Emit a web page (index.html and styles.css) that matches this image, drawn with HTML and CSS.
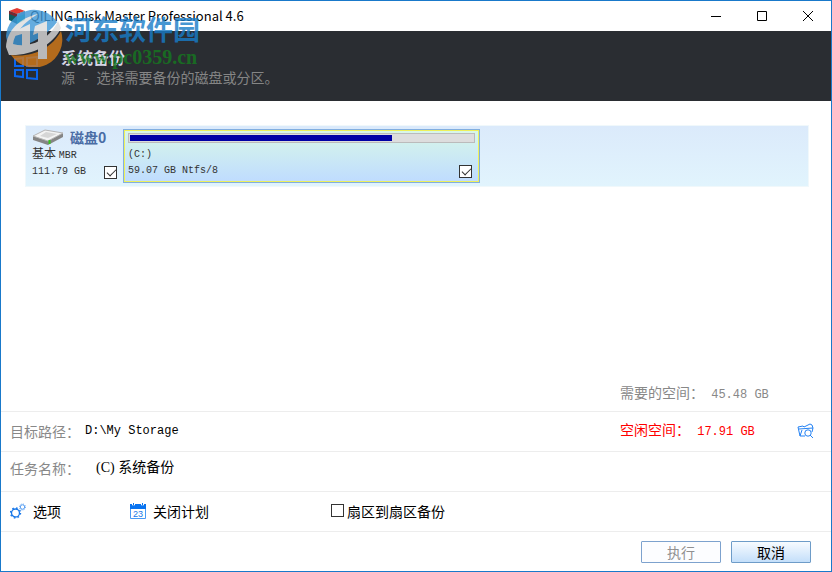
FILE: index.html
```html
<!DOCTYPE html>
<html lang="zh-CN">
<head>
  <meta charset="UTF-8">
  <meta name="viewport" content="width=device-width, initial-scale=1.0">
  <title>QILING Disk Master Professional 4.6</title>
  <link rel="stylesheet" href="styles.css">
</head>
<body>
  <div class="window">
    <div class="titlebar">
      <svg class="app-icon" width="16" height="16" viewBox="0 0 16 16">
        <path d="M8 0L16 3L8 6L0 3z" fill="#e33a32"/>
        <path d="M0 3L8 6V16L0 12z" fill="#0d5c62"/>
        <path d="M16 3L8 6V16L16 12z" fill="#18a9a4"/>
        <path d="M0 3L8 6V9L0 6z" fill="#7c2730"/>
        <path d="M16 3L8 6V9L16 6z" fill="#6b8fc0"/>
      </svg>
      <h1>QILING Disk Master Professional 4.6</h1>
      <div class="window-buttons">
        <button type="button" aria-label="最小化">
          <svg width="12" height="12" viewBox="0 0 12 12"><path d="M1 6.500H11"/></svg>
        </button>
        <button type="button" aria-label="最大化">
          <svg width="12" height="12" viewBox="0 0 12 12"><path d="M1.500 1.500H10.500V10.500H1.500z"/></svg>
        </button>
        <button type="button" aria-label="关闭">
          <svg width="12" height="12" viewBox="0 0 12 12"><path d="M1 1L11 11M11 1L1 11"/></svg>
        </button>
      </div>
    </div>

    <header class="banner">
      <svg class="banner-icon" width="26" height="24" viewBox="0 0 26 24">
        <path d="M2 3L10 2V10H2zM14 2L24 1V10H14zM2 14H10V21L2 20zM14 14H24V23L14 22z"/>
      </svg>
      <div>
        <h2>系统备份</h2>
        <p>源<span class="latin"> - </span>选择需要备份的磁盘或分区。</p>
      </div>
    </header>

    <div class="watermark">
      <svg width="58" height="58" viewBox="0 0 58 58">
        <path d="M1 27A28 28 0 0 1 52 13C42 27 22 39 3 38z" fill="#3f98d8"/>
        <path d="M56 22A28 28 0 0 1 6 46C28 49 47 39 56 22z" fill="#d77b17"/>
        <path d="M1 38C2 22 14 9 33 5C19 13 9 25 8 35C25 40 45 30 53 12L56 19C48 36 27 47 4 46z" fill="#ddd"/>
        <path d="M12 21L25 15V37H17V25L10 27zM30 17L42 12V50H33V24L28 26z" fill="#ddd"/>
      </svg>
      <div class="watermark-text">
        <span class="site-name">河东软件园</span>
        <span class="site-url">www.pc0359.cn</span>
      </div>
    </div>

    <main class="disks">
      <div class="disk">
        <div class="disk-info">
          <div class="disk-name">
            <svg width="32" height="18" viewBox="0 0 32 18">
              <path d="M1 8V12L16 17L31 9V5z" fill="#858585"/>
              <path d="M1 8L13 2L31 5L16 13z" fill="#f3f3f3" stroke="#b5b5b5"/>
              <path d="M8 8L14 4L25 6L16 10z" fill="#d6d6d6"/>
              <path d="M17.500 12V16" stroke="#35c51d" stroke-width="2"/>
            </svg>
            <strong>磁盘0</strong>
          </div>
          <div class="disk-type">基本 <span>MBR</span></div>
          <div class="disk-size">
            <label for="disk0">111.79 GB</label>
            <input type="checkbox" id="disk0" checked>
          </div>
        </div>
        <div class="partition">
          <div class="usage"><div class="used" style="width: 76.5%"></div></div>
          <label for="partC">(C:)</label>
          <div class="partition-size">
            <span>59.07 GB Ntfs/8</span>
            <input type="checkbox" id="partC" checked>
          </div>
        </div>
      </div>
    </main>

    <div class="space needed">需要的空间：<span class="latin"> 45.48 GB</span></div>

    <div class="row">
      <label class="field-label" for="path">目标路径：</label>
      <input class="path" type="text" id="path" value="D:\My Storage">
      <div class="space free">空闲空间：<span class="latin"> 17.91 GB</span></div>
      <button type="button" class="browse" aria-label="浏览">
        <svg width="18" height="16" viewBox="0 0 18 16">
          <path d="M3 13L1 4L6 3L7 4L13 1L15 2L16 5M2 6L16 5L15 9M3 13L5 7M3 13H8"/>
          <circle cx="11" cy="10" r="3.200"/>
          <path d="M13 12L16 15"/>
        </svg>
      </button>
    </div>

    <div class="row name-row">
      <label class="field-label" for="task">任务名称：</label>
      <input class="task" type="text" id="task" value="(C) 系统备份">
    </div>

    <div class="row options">
      <button type="button" class="option">
        <svg width="16" height="16" viewBox="0 0 16 16" fill="none" stroke="#1877e8">
          <circle cx="5.500" cy="10" r="4" stroke-width="1.300"/>
          <circle cx="5.500" cy="10" r="5" stroke-width="1.400" stroke-dasharray="1.600 2.327"/>
          <circle cx="12.500" cy="4" r="2.200" stroke="#5ba0f2"/>
          <circle cx="12.500" cy="4" r="3" stroke="#5ba0f2" stroke-dasharray="1.100 1.256"/>
        </svg>
        选项
      </button>
      <button type="button" class="option">
        <svg width="16" height="16" viewBox="0 0 16 16">
          <path d="M0.500 2.500H15.500V15.500H0.500z" fill="#fff" stroke="#4b9af5"/>
          <path d="M0 1H2V3H5V1H11V3H14V1H16V6H0z" fill="#0873f0"/>
          <path d="M3 0H4V2H3zM12 0H13V2H12z" fill="#0873f0"/>
          <text x="8" y="14" text-anchor="middle" class="cal-day">23</text>
        </svg>
        关闭计划
      </button>
      <label class="sector"><input type="checkbox">扇区到扇区备份</label>
    </div>

    <footer class="actions">
      <button type="button" disabled>执行</button>
      <button type="button">取消</button>
    </footer>
  </div>
</body>
</html>
```
FILE: styles.css
```css
* {
  box-sizing: border-box;
}

body {
  margin: 0;
  font-family: "Noto Sans CJK SC", sans-serif;
  font-size: 14px;
  line-height: 20px;
  color: #000;
}

h1, h2, p {
  margin: 0;
}

button, input {
  font: inherit;
  color: inherit;
}

button {
  padding: 0;
  border: none;
  background: none;
}

svg {
  flex: none;
}

.window {
  position: relative;
  display: flex;
  flex-direction: column;
  min-height: 100vh;
  border: 1px solid #1979ca;
  background: #fff;
}

.titlebar {
  display: flex;
  align-items: center;
  height: 30px;
  padding-left: 8px;
}

.titlebar h1 {
  flex: 1;
  margin-left: 5px;
  font-size: 13px;
  font-weight: normal;
}

.window-buttons {
  display: flex;
}

.window-buttons button {
  display: flex;
  align-items: center;
  justify-content: center;
  width: 46px;
  height: 28px;
}

.window-buttons path {
  fill: none;
  stroke: #000;
}

.banner {
  display: flex;
  align-items: center;
  gap: 22px;
  height: 70px;
  padding: 4px 0 0 12px;
  background: #2a2d32;
  color: #858585;
}

.banner-icon {
  fill: none;
  stroke: #0a66f0;
  stroke-width: 2;
}

.banner h2 {
  font-size: 16px;
  color: #d5d5e5;
}

.latin {
  font-family: "Liberation Mono", monospace;
  font-size: 12px;
  white-space: pre;
}

.watermark {
  position: absolute;
  top: 8px;
  left: 4px;
  display: flex;
  gap: 2px;
  opacity: 0.8;
  pointer-events: none;
}

.watermark-text {
  display: flex;
  flex-direction: column;
  padding-top: 3px;
  font-weight: bold;
}

.site-name {
  font-size: 27px;
  line-height: 34px;
  color: #187cc8;
}

.site-url {
  font-family: "Liberation Serif", serif;
  font-size: 20px;
  line-height: 22px;
  color: #167a20;
}

.disks {
  flex: 1;
  padding: 24px 22px 24px 24px;
}

.disk {
  display: flex;
  height: 62px;
  padding: 3px;
  border: 1px solid #f0f8fb;
  background: linear-gradient(#dbeafb, #e1f4fd);
  font-size: 12px;
  line-height: 16px;
  color: #333;
}

.disk-info {
  width: 94px;
  padding-left: 3px;
}

.disk-name {
  display: flex;
  align-items: center;
  gap: 6px;
  height: 16px;
}

.disk-name strong {
  font-size: 14px;
  color: #4a6ca5;
}

.disk-type span,
.disk-size,
.partition {
  font-family: "Liberation Mono", monospace;
  font-size: 10px;
}

.disk-size,
.partition-size {
  display: flex;
  align-items: center;
  justify-content: space-between;
}

.disk-size {
  padding-right: 6px;
}

.partition-size {
  padding-right: 3px;
}

input[type="checkbox"] {
  appearance: none;
  flex: none;
  width: 13px;
  height: 13px;
  margin: 0;
  border: 1px solid #333;
  background: #fff;
}

input[type="checkbox"]:checked::before {
  content: "";
  display: block;
  width: 8px;
  height: 4px;
  margin: 2px 0 0 2px;
  border-left: 1px solid #333;
  border-bottom: 1px solid #333;
  transform: rotate(-45deg);
}

.partition {
  display: flex;
  flex-direction: column;
  width: 46%;
  height: 54px;
  padding: 3px 4px;
  border: 1px solid #82aee0;
  outline: 1px solid #eef05a;
  outline-offset: -2px;
  background: linear-gradient(#d8f7e8, #bfdcff);
}

.usage {
  height: 12px;
  margin-bottom: 4px;
  padding: 1px;
  border: 1px solid #bbb;
  background: #ddd;
}

.used {
  height: 100%;
  background: #0000a5;
}

.space {
  width: 211px;
  color: #888;
}

.needed {
  align-self: flex-end;
  height: 29px;
}

.row {
  display: flex;
  align-items: center;
  height: 40px;
  padding: 0 16px 2px 9px;
  border-top: 1px solid #ededed;
}

.field-label {
  color: #888;
}

.row input[type="text"] {
  flex: 1;
  min-width: 0;
  padding: 0;
  border: none;
  outline: none;
  background: none;
}

.row .path {
  margin-left: 5px;
  font-family: "Liberation Mono", monospace;
  font-size: 12px;
}

.row .task {
  margin-left: 16px;
  font-family: "Liberation Serif", "Noto Sans CJK SC", serif;
}

.row .free {
  width: 177px;
  color: #f00;
}

.browse svg {
  display: block;
  fill: none;
  stroke: #2482f4;
}

.name-row {
  padding-bottom: 7px;
}

.option {
  display: flex;
  align-items: center;
  gap: 7px;
  width: 120px;
}

.option + .sector {
  margin-left: 81px;
}

.cal-day {
  font-family: "Liberation Sans", sans-serif;
  font-size: 9px;
  fill: #1877e8;
}

.sector {
  display: flex;
  align-items: center;
  gap: 3px;
}

.actions {
  display: flex;
  align-items: center;
  justify-content: flex-end;
  gap: 10px;
  height: 40px;
  padding-right: 20px;
  border-top: 1px solid #ededed;
}

.actions button {
  width: 80px;
  height: 22px;
  border: 1px solid #6e9cc8;
  border-radius: 1px;
  background: linear-gradient(#f7fbff, #c4dffa);
}

.actions button:disabled {
  border-color: #7da2ce;
  background: #fcfdff;
  color: #909090;
}
```
